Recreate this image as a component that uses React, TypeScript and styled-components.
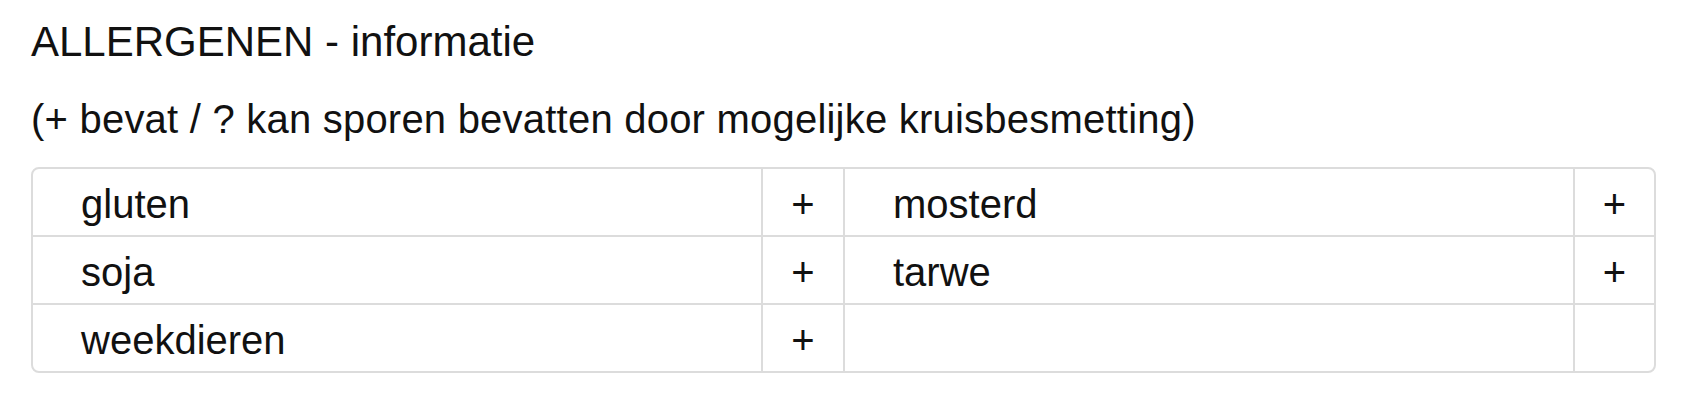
import React from 'react';
import styled, { createGlobalStyle } from 'styled-components';

interface Allergen {
  name: string;
  mark: string;
}

const allergens: Allergen[] = [
  { name: 'gluten', mark: '+' },
  { name: 'mosterd', mark: '+' },
  { name: 'soja', mark: '+' },
  { name: 'tarwe', mark: '+' },
  { name: 'weekdieren', mark: '+' },
  { name: '', mark: '' },
];

const GlobalStyle = createGlobalStyle`
  html, body {
    margin: 0;
    padding: 0;
    background: #fff;
  }

  body {
    font-family: "Liberation Sans", Arial, Helvetica, sans-serif;
    color: #111;
  }
`;

const Container = styled.main`
  padding: 19px 38px 0 31px;
`;

const Title = styled.h1`
  margin: 0 0 31px;
  font-size: 42px;
  font-weight: 400;
  line-height: 46px;
`;

const Legend = styled.p`
  margin: 0 0 25px;
  font-size: 40px;
  line-height: 46px;
  letter-spacing: 0.22px;
`;

const Table = styled.div`
  display: grid;
  grid-template-columns: 730fr 82fr 730fr 79fr;
  border: 2px solid #dcdcdc;
  border-radius: 8px;
  overflow: hidden;
`;

const Cell = styled.div<{ $sign?: boolean; $lastCol?: boolean; $lastRow?: boolean }>`
  display: flex;
  align-items: center;
  justify-content: ${p => (p.$sign ? 'center' : 'flex-start')};
  height: 63px;
  padding: 3px ${p => (p.$sign ? '0' : '48px')} 0;
  font-size: 40px;
  line-height: 46px;
  border-right: ${p => (p.$lastCol ? 'none' : '2px solid #dcdcdc')};
  border-bottom: ${p => (p.$lastRow ? 'none' : '2px solid #dcdcdc')};
  white-space: nowrap;
`;

const App: React.FC = () => {
  const rows = Math.ceil(allergens.length / 2);

  return (
    <Container>
      <GlobalStyle />
      <Title>ALLERGENEN - informatie</Title>
      <Legend>(+ bevat / ? kan sporen bevatten door mogelijke kruisbesmetting)</Legend>
      <Table>
        {allergens.map((item, i) => {
          const lastRow = Math.floor(i / 2) === rows - 1;
          const lastCol = i % 2 === 1;
          return (
            <React.Fragment key={i}>
              <Cell $lastRow={lastRow}>{item.name}</Cell>
              <Cell $sign $lastRow={lastRow} $lastCol={lastCol}>
                {item.mark}
              </Cell>
            </React.Fragment>
          );
        })}
      </Table>
    </Container>
  );
};

export default App;
